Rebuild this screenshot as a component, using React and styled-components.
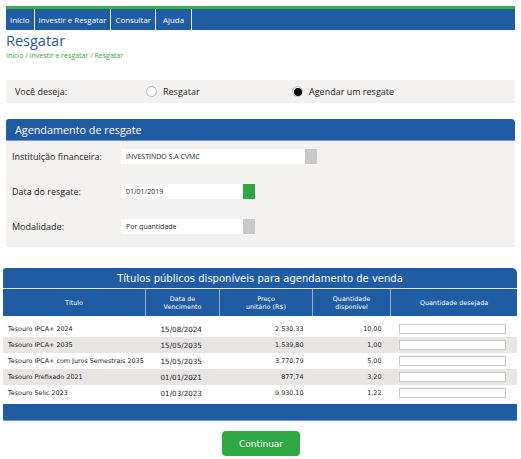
import React from 'react'
import styled, { createGlobalStyle } from 'styled-components'

const GlobalStyle = createGlobalStyle`
  body {
    margin: 0;
    background: #fff;
    font-family: "Open Sans", "Noto Sans", sans-serif;
  }
`

const Page = styled.div`
  width: 521px;
  padding-top: 6px;
`

const Nav = styled.nav`
  margin: 0 6px;
  border-top: 3px solid #3aad47;
  background: #1f5ca4;
  height: 21px;
  display: flex;
  align-items: stretch;
`

const NavItem = styled.a`
  color: #fff;
  font-size: 7.9px;
  display: flex;
  align-items: center;
  padding: 0 ${p => p.pad || 4}px;
  border-right: 1px solid #e8eef6;
  text-decoration: none;
`

const Title = styled.h1`
  margin: 3px 0 0 6px;
  font-size: 14.5px;
  font-weight: 400;
  color: #1f5ca4;
  line-height: 16px;
`

const Crumb = styled.div`
  margin: 2px 0 0 6px;
  font-size: 7px;
  color: #3aa040;
`

const ChoiceBox = styled.div`
  margin: 20px 6px 0;
  height: 23px;
  background: #f3f2f1;
  display: flex;
  align-items: center;
  font-size: 9px;
  color: #222;
`

const ChoiceLabel = styled.span`
  width: 131px;
  padding-left: 9px;
`

const RadioWrap = styled.label`
  display: flex;
  align-items: center;
  gap: 6px;
  width: ${p => p.w}px;
`

const Radio = styled.span`
  width: 11px;
  height: 11px;
  border-radius: 50%;
  border: 1px solid #bbb;
  background: #fff;
  box-sizing: border-box;
  display: flex;
  align-items: center;
  justify-content: center;
  &::after {
    content: '';
    display: ${p => (p.on ? 'block' : 'none')};
    width: 8px;
    height: 8px;
    border-radius: 50%;
    background: #000;
  }
`

const Section = styled.section`
  margin: 16px 6px 0;
`

const SectionHead = styled.div`
  background: #1f5ca4;
  height: 21px;
  border-radius: 3px 4px 0 0;
  color: #fff;
  font-size: 10.8px;
  display: flex;
  align-items: center;
  padding-left: 9px;
  border-bottom: 1px solid #6e9bd0;
`

const SectionBody = styled.div`
  background: #f3f2f1;
  padding: 8px 0 13px;
  display: flex;
  flex-direction: column;
  gap: 20px;
`

const FieldRow = styled.div`
  display: flex;
  align-items: center;
  height: 15px;
  font-size: 9px;
  color: #222;
`

const FieldLabel = styled.span`
  width: 109px;
  padding-left: 6px;
`

const FieldInput = styled.div`
  width: ${p => p.w}px;
  height: 15px;
  background: #fff;
  font-size: 7px;
  display: flex;
  align-items: center;
  padding-left: 5px;
  box-sizing: border-box;
  color: #222;
`

const FieldButton = styled.div`
  width: 12px;
  height: 15px;
  background: ${p => p.color};
`

const TableBox = styled.div`
  margin: 21px 4px 0 3px;
  font-family: "DejaVu Sans", Verdana, sans-serif;
`

const TableHead = styled.div`
  background: #1f5ca4;
  border-radius: 3px 5px 0 0;
  height: 20px;
  display: flex;
  align-items: center;
  justify-content: center;
  color: #fff;
  font-size: 10px;
  border-bottom: 1px solid #dfe7f1;
`

const Table = styled.table`
  width: 100%;
  table-layout: fixed;
  border-collapse: collapse;
  color: #222;
`

const Th = styled.th`
  background: #1f5ca4;
  color: #fff;
  font-weight: 400;
  font-size: 6.4px;
  height: 27px;
  width: ${p => (p.w ? `${p.w}px` : 'auto')};
  border-left: 1px solid #8fb0d8;
  line-height: 8px;
  padding: 0;
  &:first-child {
    border-left: none;
  }
`

const Spacer = styled.tr`
  height: 5px;
`

const Tr = styled.tr`
  background: ${p => (p.alt ? '#e7e6e5' : '#fff')};
  height: 16px;
`

const Td = styled.td`
  padding: 0 ${p => p.pr || 0}px 0 ${p => p.pl || 0}px;
  text-align: ${p => p.align || 'left'};
  font-size: ${p => (p.big ? '7.2px' : '6.4px')};
  white-space: nowrap;
`

const QtyInput = styled.div`
  width: 107px;
  height: 10px;
  margin-left: 8px;
  background: #fff;
  border: 1px solid #c8c8c8;
  box-sizing: border-box;
`

const TableFoot = styled.div`
  background: #1f5ca4;
  height: 16px;
  margin-top: 3px;
  border-bottom: 1px solid #6e9bd0;
`

const Actions = styled.div`
  display: flex;
  justify-content: center;
  margin-top: 10px;
`

const Button = styled.button`
  width: 78px;
  height: 25px;
  margin-left: 1px;
  background: #2ea843;
  border: none;
  border-radius: 4px;
  color: #fff;
  font-family: "DejaVu Sans", Verdana, sans-serif;
  font-size: 9px;
`

const rows = [
  ['Tesouro IPCA+ 2024', '15/08/2024', '2.530,33', '10,00'],
  ['Tesouro IPCA+ 2035', '15/05/2035', '1.539,80', '1,00'],
  ['Tesouro IPCA+ com Juros Semestrais 2035', '15/05/2035', '3.770,79', '5,00'],
  ['Tesouro Prefixado 2021', '01/01/2021', '877,74', '3,20'],
  ['Tesouro Selic 2023', '01/03/2023', '9.930,10', '1,22'],
]

export default function App() {
  return (
    <Page>
      <GlobalStyle />
      <Nav>
        <NavItem>Início</NavItem>
        <NavItem>Investir e Resgatar</NavItem>
        <NavItem>Consultar</NavItem>
        <NavItem pad={7}>Ajuda</NavItem>
      </Nav>
      <Title>Resgatar</Title>
      <Crumb>Início / Investir e resgatar / Resgatar</Crumb>

      <ChoiceBox>
        <ChoiceLabel>Você deseja:</ChoiceLabel>
        <RadioWrap w={146}>
          <Radio />
          Resgatar
        </RadioWrap>
        <RadioWrap>
          <Radio on />
          Agendar um resgate
        </RadioWrap>
      </ChoiceBox>

      <Section>
        <SectionHead>Agendamento de resgate</SectionHead>
        <SectionBody>
          <FieldRow>
            <FieldLabel>Instituição financeira:</FieldLabel>
            <FieldInput w={184}>INVESTINDO S.A CVMC</FieldInput>
            <FieldButton color="#c9c9c9" />
          </FieldRow>
          <FieldRow>
            <FieldLabel>Data do resgate:</FieldLabel>
            <FieldInput w={122}>01/01/2019</FieldInput>
            <FieldButton color="#2ea843" />
          </FieldRow>
          <FieldRow>
            <FieldLabel>Modalidade:</FieldLabel>
            <FieldInput w={122}>Por quantidade</FieldInput>
            <FieldButton color="#c9c9c9" />
          </FieldRow>
        </SectionBody>
      </Section>

      <TableBox>
        <TableHead>Títulos públicos disponíveis para agendamento de venda</TableHead>
        <Table>
          <thead>
            <tr>
              <Th w={142}>Título</Th>
              <Th w={73}>Data de<br />Vencimento</Th>
              <Th w={92}>Preço<br />unitário (R$)</Th>
              <Th w={77}>Quantidade<br />disponível</Th>
              <Th>Quantidade desejada</Th>
            </tr>
          </thead>
          <tbody>
            <Spacer />
            {rows.map((r, i) => (
              <Tr key={r[0]} alt={i % 2 === 1}>
                <Td pl={5}>{r[0]}</Td>
                <Td pl={15} big>{r[1]}</Td>
                <Td align="right" pr={9}>{r[2]}</Td>
                <Td align="right" pr={9}>{r[3]}</Td>
                <Td><QtyInput /></Td>
              </Tr>
            ))}
          </tbody>
        </Table>
        <TableFoot />
      </TableBox>

      <Actions>
        <Button>Continuar</Button>
      </Actions>
    </Page>
  )
}
